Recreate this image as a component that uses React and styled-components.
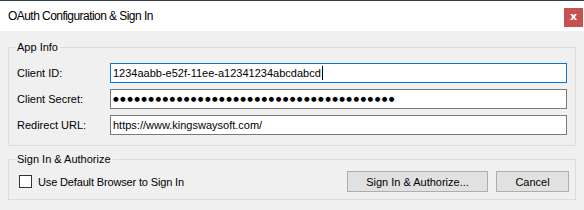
import React from 'react';
import styled, { createGlobalStyle } from 'styled-components';

const GlobalStyle = createGlobalStyle`
  html, body {
    margin: 0;
    padding: 0;
    background: #f0f0f0;
  }
  body {
    font-family: "Liberation Sans", Arial, sans-serif;
    font-size: 11px;
    color: #000;
  }
`;

const Window = styled.div`
  width: 584px;
  height: 210px;
  background: #f0f0f0;
  display: flex;
  flex-direction: column;
  overflow: hidden;
`;

const TitleBar = styled.div`
  box-sizing: border-box;
  height: 31px;
  border-top: 1px solid #2f3f4e;
  background: #fff;
  display: flex;
  align-items: flex-start;
  justify-content: space-between;
  padding: 0 1px 0 8px;
`;

const Title = styled.span`
  font-size: 12px;
  letter-spacing: -0.55px;
  line-height: 31px;
`;

const CloseButton = styled.button`
  width: 19px;
  height: 19px;
  margin-top: 7px;
  border: 0;
  padding: 0 0 2px;
  background: #c75050;
  color: #fff;
  font: bold 11px "DejaVu Sans", sans-serif;
  display: flex;
  align-items: center;
  justify-content: center;
`;

const Body = styled.div`
  display: flex;
  flex-direction: column;
  gap: 7px;
  padding: 10px 8px 0;
`;

const GroupBox = styled.fieldset`
  margin: 0;
  padding: 0;
  min-width: 0;
  border: 1px solid #dcdcdc;
`;

const Caption = styled.legend`
  margin-left: 6px;
  padding: 0 2px;
  font-size: 11px;
  line-height: 13px;
`;

const FieldGrid = styled.div`
  display: grid;
  grid-template-columns: 93px 457px;
  grid-auto-rows: 20px;
  row-gap: 6px;
  align-items: center;
  padding: 9px 0 10px 8px;
`;

const Label = styled.span`
  white-space: nowrap;
`;

const TextBox = styled.div`
  box-sizing: border-box;
  height: 20px;
  border: 1px solid ${(p) => (p.$focused ? '#0078d7' : '#7a7a7a')};
  background: #fff;
  padding-left: 2px;
  display: flex;
  align-items: center;
  white-space: nowrap;
  overflow: hidden;
`;

const Caret = styled.span`
  width: 1px;
  height: 14px;
  background: #000;
  margin-left: 1px;
`;

const Dots = styled.span`
  font-family: "DejaVu Sans", sans-serif;
  font-size: 6.5px;
  letter-spacing: 1.4px;
`;

const ActionRow = styled.div`
  display: flex;
  align-items: center;
  padding: 5px 6px 7px 10px;
`;

const CheckLabel = styled.label`
  display: flex;
  align-items: center;
  gap: 6px;
  flex: 1;
  letter-spacing: -0.15px;
`;

const CheckBox = styled.span`
  box-sizing: border-box;
  width: 13px;
  height: 13px;
  border: 1px solid #333;
  background: #fff;
`;

const Button = styled.button`
  box-sizing: border-box;
  width: ${(p) => p.$width}px;
  height: 21px;
  margin-left: 8px;
  border: 1px solid #adadad;
  background: #e1e1e1;
  font-family: "Liberation Sans", Arial, sans-serif;
  font-size: 11px;
  color: #000;
  padding: 0;
`;

export default function App() {
  return (
    <>
      <GlobalStyle />
      <Window>
        <TitleBar>
          <Title>OAuth Configuration &amp; Sign In</Title>
          <CloseButton>x</CloseButton>
        </TitleBar>
        <Body>
          <GroupBox>
            <Caption>App Info</Caption>
            <FieldGrid>
              <Label>Client ID:</Label>
              <TextBox $focused>
                1234aabb-e52f-11ee-a12341234abcdabcd
                <Caret />
              </TextBox>
              <Label>Client Secret:</Label>
              <TextBox>
                <Dots>{'●'.repeat(40)}</Dots>
              </TextBox>
              <Label>Redirect URL:</Label>
              <TextBox>https://www.kingswaysoft.com/</TextBox>
            </FieldGrid>
          </GroupBox>
          <GroupBox>
            <Caption>Sign In &amp; Authorize</Caption>
            <ActionRow>
              <CheckLabel>
                <CheckBox />
                Use Default Browser to Sign In
              </CheckLabel>
              <Button $width={141}>Sign In &amp; Authorize...</Button>
              <Button $width={73}>Cancel</Button>
            </ActionRow>
          </GroupBox>
        </Body>
      </Window>
    </>
  );
}
